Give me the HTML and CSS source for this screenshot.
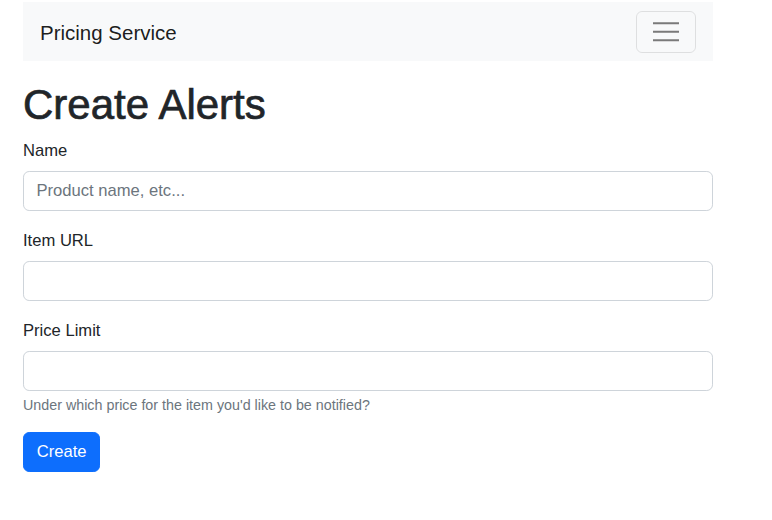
FILE: index.html
```html
<!DOCTYPE html>
<html lang="en">
<head>
<meta charset="utf-8">
<title>Create Alerts</title>
<link rel="stylesheet" href="styles.css">
</head>
<body>
<div class="page">
  <nav class="navbar">
    <span class="brand">Pricing Service</span>
    <button class="toggler" type="button" aria-label="Toggle navigation">
      <svg class="toggler-icon" width="28" height="22" viewBox="0 0 28 22" aria-hidden="true">
        <path d="M1 2.3h26M1 10.7h26M1 19.3h26" stroke="#7a7a7a" stroke-width="2" fill="none"/>
      </svg>
    </button>
  </nav>
  <h1 class="title">Create Alerts</h1>
  <form class="form">
    <div class="group">
      <label class="label" for="name">Name</label>
      <input class="control" id="name" type="text" placeholder="Product name, etc...">
    </div>
    <div class="group">
      <label class="label" for="url">Item URL</label>
      <input class="control" id="url" type="text">
    </div>
    <div class="group group-last">
      <label class="label" for="price">Price Limit</label>
      <input class="control" id="price" type="text">
      <div class="help">Under which price for the item you'd like to be notified?</div>
    </div>
    <button class="btn" type="button">Create</button>
  </form>
</div>
</body>
</html>
```
FILE: styles.css
```css
html, body {
  margin: 0;
  background: #ffffff;
}
body {
  font-family: "Liberation Sans", Arial, Helvetica, sans-serif;
  color: #212529;
}
.page {
  width: 690px;
  padding: 2px 0 0 23px;
}
.navbar {
  display: flex;
  justify-content: space-between;
  align-items: center;
  box-sizing: border-box;
  height: 59px;
  padding: 0 17px;
  background: #f8f9fa;
}
.brand {
  font-size: 20.5px;
  line-height: 30px;
  margin-top: 3px;
  color: rgba(0, 0, 0, 0.9);
}
.toggler {
  display: flex;
  align-items: center;
  justify-content: center;
  box-sizing: border-box;
  width: 60px;
  height: 42px;
  padding: 0;
  background: transparent;
  border: 1px solid rgba(0, 0, 0, 0.1);
  border-radius: 6px;
}
.toggler-icon {
  display: block;
}
.title {
  margin: 18.5px 0 8.3px;
  font-size: 42px;
  font-weight: 400;
  line-height: 1.2;
  -webkit-text-stroke: 0.7px #212529;
}
.form {
  margin: 0;
}
.group {
  margin-bottom: 16.8px;
}
.group-last {
  margin-bottom: 15px;
}
.label {
  display: block;
  font-size: 16.6px;
  line-height: 25px;
  margin-bottom: 8.3px;
}
.control {
  display: block;
  box-sizing: border-box;
  width: 100%;
  height: 39.8px;
  margin: 0;
  padding: 0 12.5px;
  font-family: inherit;
  font-size: 16.6px;
  color: #212529;
  background: #ffffff;
  border: 1px solid #ced4da;
  border-radius: 6.2px;
}
.control::placeholder {
  color: #6c757d;
  opacity: 1;
}
.help {
  margin-top: 4px;
  font-size: 14.3px;
  line-height: 21.8px;
  color: #6c757d;
}
.btn {
  box-sizing: border-box;
  height: 40px;
  padding: 0 12.8px;
  font-family: inherit;
  font-size: 16.6px;
  color: #ffffff;
  background: #0d6efd;
  border: 1px solid #0d6efd;
  border-radius: 6.2px;
}
```
